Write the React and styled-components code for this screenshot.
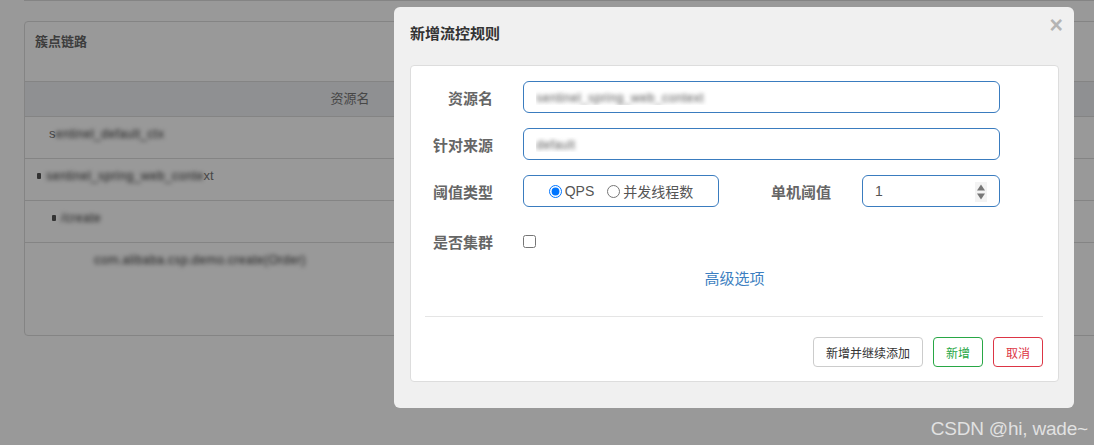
import styled, { createGlobalStyle } from 'styled-components';

const GlobalStyle = createGlobalStyle`
  * { box-sizing: border-box; }
  html, body { margin: 0; padding: 0; }
  body {
    background: #fff;
    overflow: hidden;
    font-family: "Liberation Sans", Arial, "Noto Sans CJK SC", sans-serif;
  }
`;

const treeRows = [
  { indent: 24, lead: 's', text: 'entinel_default_ctx', tail: '' },
  { indent: 12, bullet: true, text: 'sentinel_spring_web_conte', tail: 'xt' },
  { indent: 27, bullet: true, text: '/create', tail: '' },
  { indent: 69, text: 'com.alibaba.csp.demo.create(Order)', tail: '', last: true },
];

const App = () => {
  return (
    <>
      <GlobalStyle />
      <Page>
        <PrevEdge />
        <Card>
          <CardHeader>
            <CardTitle>簇点链路</CardTitle>
          </CardHeader>
          <TableHead>
            <HeadCell>资源名</HeadCell>
          </TableHead>
          {treeRows.map((row, i) => (
            <TreeRow key={i} $indent={row.indent} $last={row.last}>
              {row.bullet && <Bullet />}
              {row.lead && <span>{row.lead}</span>}
              <Blurred>{row.text}</Blurred>
              {row.tail && <span>{row.tail}</span>}
            </TreeRow>
          ))}
        </Card>

        <Overlay>
          <Watermark>CSDN @hi, wade~</Watermark>
        </Overlay>

        <Modal>
          <CloseButton type="button">×</CloseButton>
          <ModalHeader>
            <ModalTitle>新增流控规则</ModalTitle>
          </ModalHeader>
          <Panel>
            <FormRow>
              <Label>资源名</Label>
              <TextInput readOnly value="sentinel_spring_web_context" />
            </FormRow>
            <FormRow>
              <Label>针对来源</Label>
              <TextInput readOnly value="default" />
            </FormRow>
            <FormRow>
              <Label>阈值类型</Label>
              <SplitCell>
                <RadioBox>
                  <RadioLabel>
                    <input type="radio" name="grade" defaultChecked />
                    QPS
                  </RadioLabel>
                  <RadioLabel>
                    <input type="radio" name="grade" />
                    并发线程数
                  </RadioLabel>
                </RadioBox>
                <InlineLabel>单机阈值</InlineLabel>
                <NumberField>
                  <NumberInput readOnly value="1" />
                  <Spinner width="12" height="20" viewBox="0 0 12 20">
                    <rect x="0" y="0" width="12" height="20" fill="#f3f3f3" />
                    <path d="M2 8.5 L6 2.5 L10 8.5 Z" fill="#777" />
                    <path d="M2 11.5 L6 17.5 L10 11.5 Z" fill="#777" />
                  </Spinner>
                </NumberField>
              </SplitCell>
            </FormRow>
            <FormRow $top={18}>
              <Label>是否集群</Label>
              <CheckCell>
                <input type="checkbox" />
              </CheckCell>
            </FormRow>
            <AdvancedLink>高级选项</AdvancedLink>
            <Divider />
            <Footer>
              <ActionButton $tone="default">新增并继续添加</ActionButton>
              <ActionButton $tone="success">新增</ActionButton>
              <ActionButton $tone="danger">取消</ActionButton>
            </Footer>
          </Panel>
        </Modal>
      </Page>
    </>
  );
};

export default App;

// ---------- background page ----------

const Page = styled.div`
  position: relative;
  height: 445px;
  padding-left: 24px;
  overflow: hidden;
`;

const PrevEdge = styled.div`
  height: 1px;
  background: #ddd;
`;

const Card = styled.section`
  margin-top: 20px;
  width: 1150px;
  height: 315px;
  border: 1px solid #ddd;
  border-radius: 4px;
  background: #fff;
`;

const CardHeader = styled.header`
  height: 60px;
  padding: 10px 10px;
  border-bottom: 1px solid #ddd;
`;

const CardTitle = styled.h3`
  margin: 0;
  font-size: 13px;
  line-height: 20px;
  font-weight: bold;
  color: #666;
`;

const TableHead = styled.div`
  display: grid;
  grid-template-columns: 650px 1fr;
  height: 35px;
  background: #eef0f3;
  border-bottom: 1px solid #ddd;
`;

const HeadCell = styled.div`
  text-align: center;
  font-size: 13px;
  line-height: 34px;
  color: #777;
`;

const TreeRow = styled.div`
  display: flex;
  align-items: flex-start;
  height: 42px;
  padding: 8px 0 0 ${({ $indent }) => $indent}px;
  font-size: 13px;
  line-height: 17px;
  color: #777;
  border-bottom: ${({ $last }) => ($last ? 'none' : '1px solid #ddd')};
`;

const Bullet = styled.i`
  display: inline-block;
  width: 4px;
  height: 6px;
  margin: 6px 5px 0 0;
  background: #555;
  border-radius: 1px;
`;

const Blurred = styled.span`
  color: transparent;
  text-shadow: 0 0 4px rgba(60, 60, 60, 1);
`;

const Overlay = styled.div`
  position: absolute;
  inset: 0;
  background: rgba(0, 0, 0, 0.4);
`;

const Watermark = styled.div`
  position: absolute;
  right: 6px;
  bottom: 5px;
  font-size: 19px;
  line-height: 22px;
  color: rgba(255, 255, 255, 0.72);
  letter-spacing: -0.2px;
`;

// ---------- modal ----------

const Modal = styled.div`
  position: absolute;
  left: 394px;
  top: 7px;
  width: 680px;
  height: 401px;
  background: #f0f0f0;
  border-radius: 6px;
`;

const CloseButton = styled.button`
  position: absolute;
  top: 7px;
  right: 11px;
  padding: 0;
  border: none;
  background: none;
  font-family: "Liberation Sans", Arial, sans-serif;
  font-size: 23px;
  line-height: 1;
  font-weight: bold;
  color: #b4b4b4;
  cursor: pointer;
`;

const ModalHeader = styled.div`
  padding: 15px 16px 19px;
`;

const ModalTitle = styled.h4`
  margin: 0;
  font-size: 15px;
  line-height: 24px;
  font-weight: bold;
  color: #333;
`;

const Panel = styled.div`
  margin: 0 15px 0 16px;
  padding: 15px 0 14px;
  background: #fff;
  border: 1px solid #ddd;
  border-radius: 4px;
`;

const FormRow = styled.div`
  display: grid;
  grid-template-columns: 82px 477px;
  column-gap: 30px;
  align-items: center;
  height: 32px;
  margin-top: ${({ $top }) => ($top ?? 15)}px;

  &:first-child {
    margin-top: 0;
  }
`;

const Label = styled.label`
  text-align: right;
  font-size: 15px;
  font-weight: bold;
  color: #666;
  white-space: nowrap;
`;

const TextInput = styled.input`
  width: 100%;
  height: 32px;
  padding: 0 12px;
  border: 1px solid #3a7cbf;
  border-radius: 6px;
  outline: none;
  font-family: "Liberation Sans", Arial, sans-serif;
  font-size: 13px;
  color: transparent;
  text-shadow: 0 0 4px rgba(90, 90, 90, 1);
`;

const SplitCell = styled.div`
  display: grid;
  grid-template-columns: 196px 1fr 138px;
  align-items: center;
  height: 32px;
`;

const RadioBox = styled.div`
  display: flex;
  align-items: center;
  justify-content: center;
  gap: 13px;
  height: 32px;
  border: 1px solid #3a7cbf;
  border-radius: 6px;
`;

const RadioLabel = styled.label`
  display: inline-flex;
  align-items: center;
  gap: 3px;
  font-size: 14px;
  color: #555;

  input {
    margin: 0;
    width: 13px;
    height: 13px;
  }
`;

const InlineLabel = styled(Label)`
  padding-right: 31px;
`;

const NumberField = styled.div`
  display: flex;
  align-items: center;
  height: 32px;
  padding: 0 12px;
  border: 1px solid #3a7cbf;
  border-radius: 6px;
`;

const NumberInput = styled.input`
  flex: 1;
  min-width: 0;
  padding: 0;
  border: none;
  outline: none;
  font-family: "Liberation Sans", Arial, sans-serif;
  font-size: 14px;
  color: #555;
`;

const Spinner = styled.svg`
  flex-shrink: 0;
  margin-top: 1px;
`;

const CheckCell = styled.div`
  display: flex;
  align-items: center;

  input {
    margin: 0;
    width: 13px;
    height: 13px;
  }
`;

const AdvancedLink = styled.a`
  display: block;
  margin-top: 12px;
  text-align: center;
  font-size: 15px;
  line-height: 20px;
  color: #3d7fc1;
  cursor: pointer;
`;

const Divider = styled.hr`
  margin: 27px 15px 20px 14px;
  border: none;
  border-top: 1px solid #e5e5e5;
`;

const Footer = styled.div`
  display: flex;
  justify-content: flex-end;
  gap: 10px;
  padding: 0 15px;
`;

const tones = {
  default: { border: '#ccc', color: '#333' },
  success: { border: '#28a745', color: '#28a745' },
  danger: { border: '#dc3545', color: '#dc3545' },
};

const ActionButton = styled.button`
  height: 30px;
  padding: 0 12px;
  background: #fff;
  border: 1px solid ${({ $tone }) => tones[$tone].border};
  border-radius: 4px;
  font-family: "Liberation Sans", Arial, "Noto Sans CJK SC", sans-serif;
  font-size: 12px;
  color: ${({ $tone }) => tones[$tone].color};
  cursor: pointer;
`;
